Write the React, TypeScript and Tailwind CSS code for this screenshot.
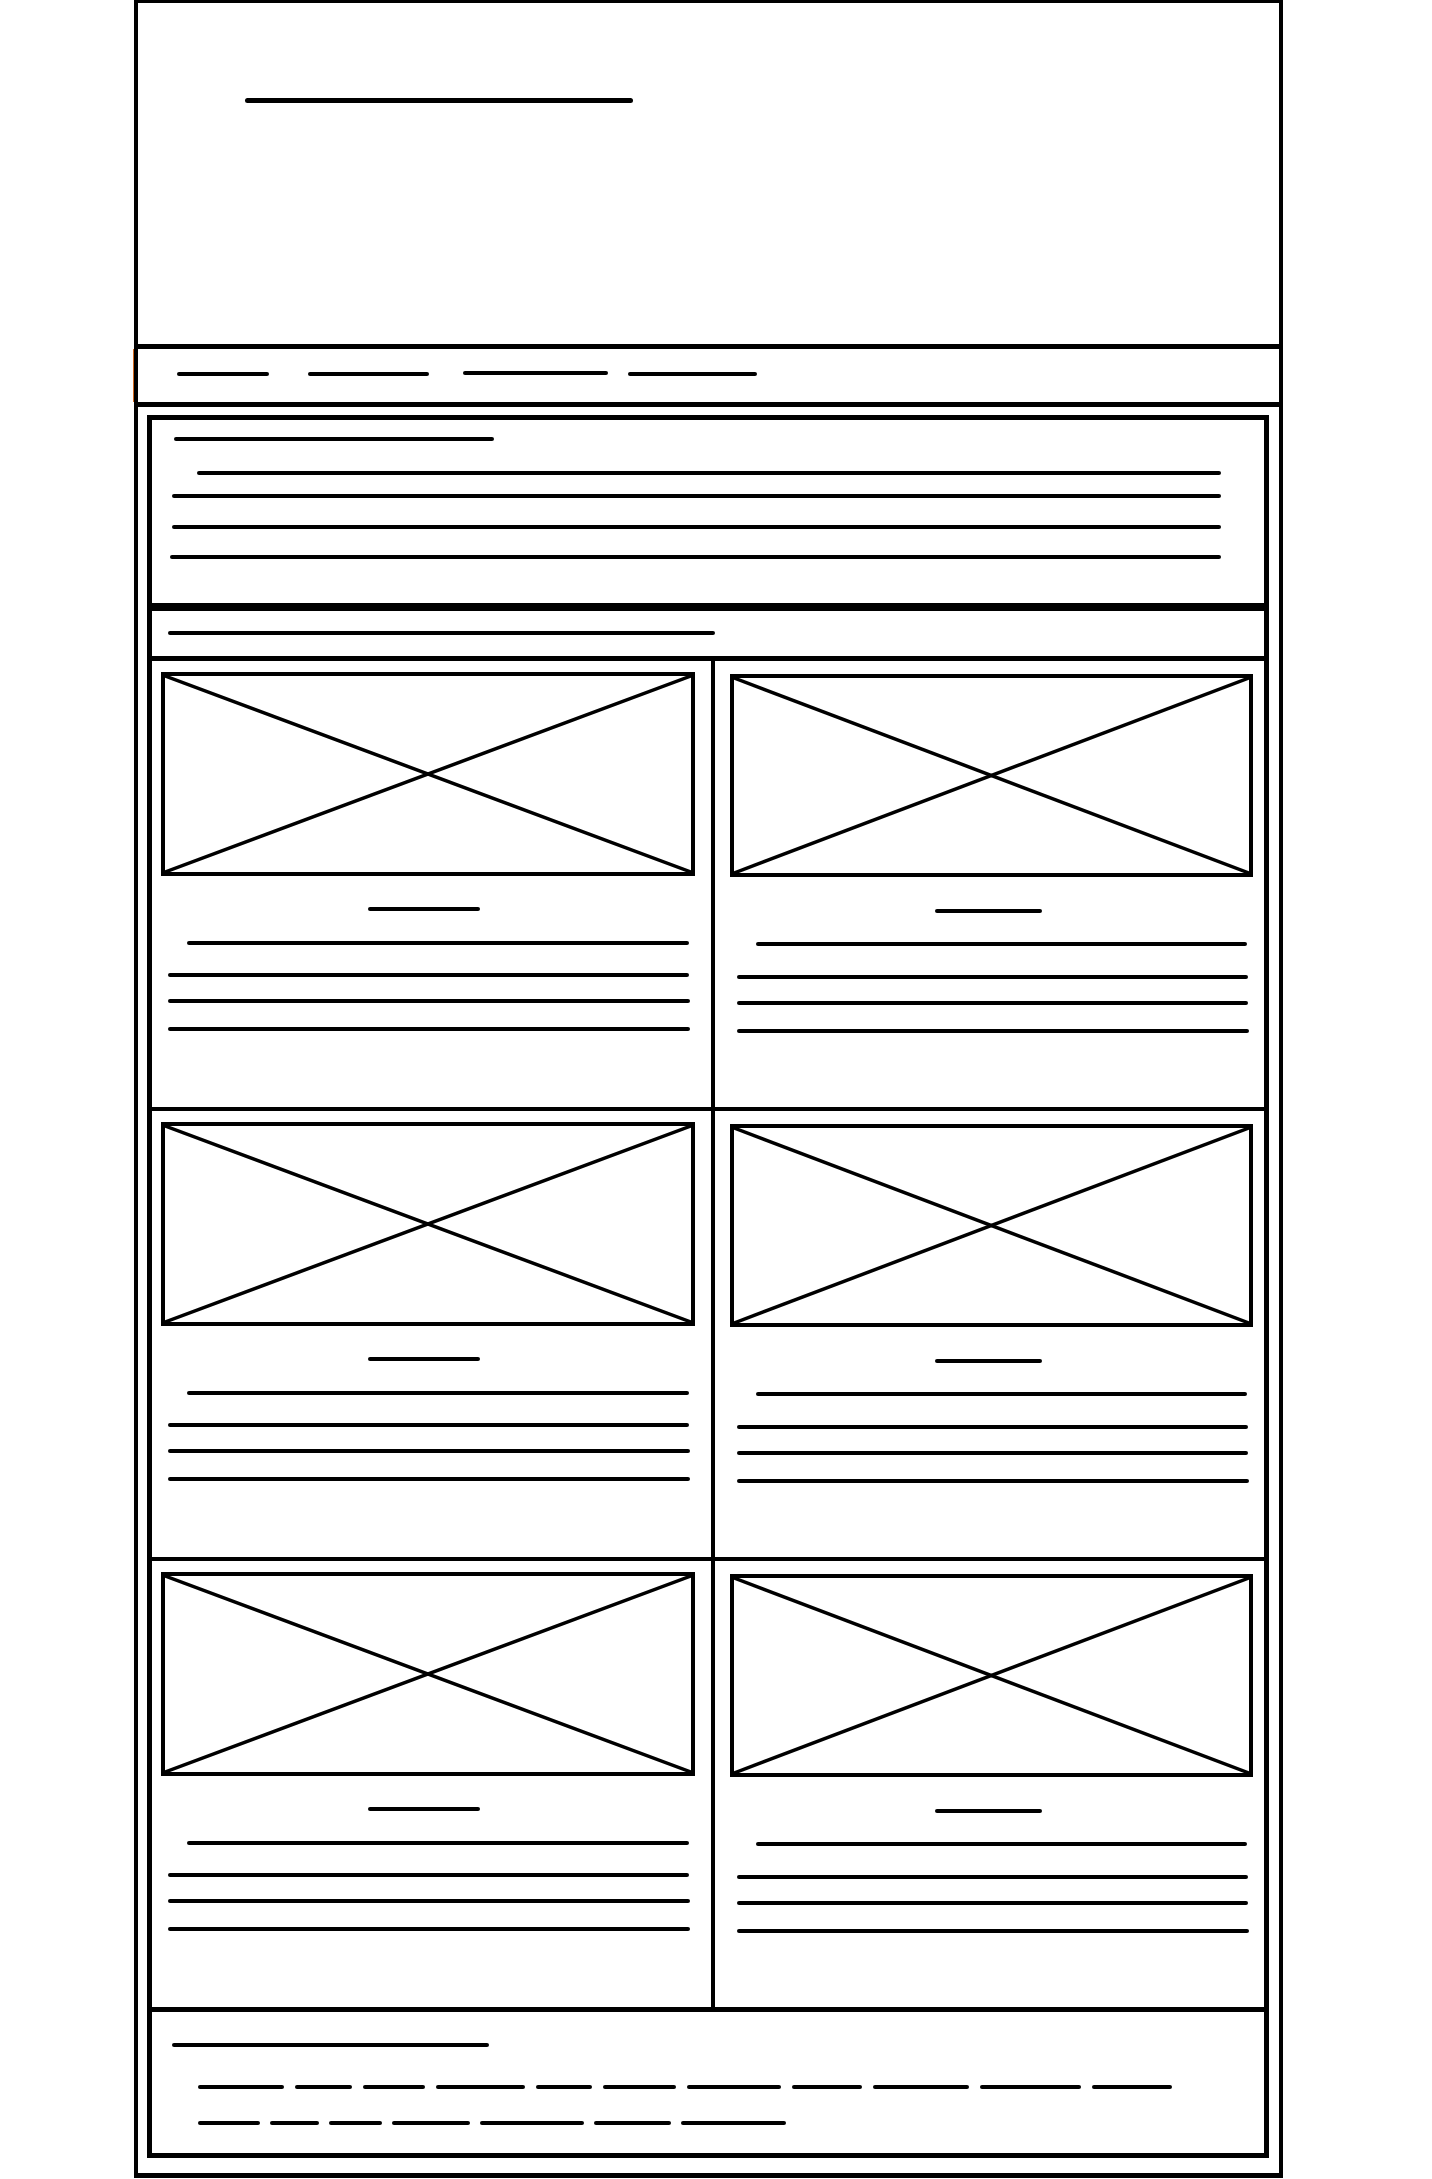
import React from 'react';

// a "text" placeholder stroke in the wireframe
function Bar({ className = '' }: { className?: string }) {
  return <div className={`h-[4px] shrink-0 rounded-full bg-black ${className}`} />;
}

// crossed-out image placeholder
function ImageBox({ className = '' }: { className?: string }) {
  return (
    <div className={`shrink-0 border-[4px] border-black ${className}`}>
      <svg className="block h-full w-full" viewBox="0 0 100 100" preserveAspectRatio="none">
        <line x1="0" y1="0" x2="100" y2="100" stroke="black" strokeWidth="3.5" vectorEffect="non-scaling-stroke" />
        <line x1="100" y1="0" x2="0" y2="100" stroke="black" strokeWidth="3.5" vectorEffect="non-scaling-stroke" />
      </svg>
    </div>
  );
}

function LeftCard() {
  return (
    <div className="flex h-[446px] flex-col border-r-[4px] border-black">
      <ImageBox className="ml-[9px] mt-[11px] h-[204px] w-[534px]" />
      <Bar className="ml-[216px] mt-[31px] w-[112px]" />
      <Bar className="ml-[35px] mt-[30px] w-[502px]" />
      <Bar className="ml-[16px] mt-[28px] w-[521px]" />
      <Bar className="ml-[16px] mt-[22px] w-[522px]" />
      <Bar className="ml-[16px] mt-[24px] w-[522px]" />
    </div>
  );
}

function RightCard() {
  return (
    <div className="flex h-[446px] flex-col">
      <ImageBox className="ml-[15px] mt-[13px] h-[203px] w-[523px]" />
      <Bar className="ml-[220px] mt-[32px] w-[107px]" />
      <Bar className="ml-[41px] mt-[29px] w-[491px]" />
      <Bar className="ml-[22px] mt-[29px] w-[511px]" />
      <Bar className="ml-[22px] mt-[22px] w-[511px]" />
      <Bar className="ml-[22px] mt-[24px] w-[512px]" />
    </div>
  );
}

const footerRow1 = [86, 57, 62, 89, 56, 73, 94, 70, 96, 101, 80];
const footerRow2 = [62, 49, 53, 78, 104, 77, 105];

export default function App() {
  return (
    <div className="min-h-[2179px] w-[1432px] bg-white">
      <div className="ml-[134px] flex h-[2178px] w-[1149px] flex-col border-x-[4px] border-b-[5px] border-t-[3px] border-black">
        {/* header */}
        <header className="h-[346px] shrink-0 border-b-[5px] border-black">
          <Bar className="ml-[107px] mt-[95px] h-[5px] w-[388px]" />
        </header>

        {/* nav */}
        <nav className="relative flex h-[58px] shrink-0 items-start border-b-[5px] border-black pt-[23px]">
          <span className="absolute -left-[5px] top-0 h-[53px] w-px bg-[#d2691e]" />
          <Bar className="ml-[39px] w-[92px]" />
          <Bar className="ml-[39px] w-[121px]" />
          <Bar className="-mt-px ml-[34px] w-[145px]" />
          <Bar className="ml-[20px] w-[129px]" />
        </nav>

        {/* content panel */}
        <main className="ml-[9px] mr-[10px] mt-[8px] flex flex-col border-[5px] border-black">
          <section className="flex h-[187px] flex-col border-b-[4px] border-black">
            <Bar className="ml-[22px] mt-[17px] w-[320px]" />
            <Bar className="ml-[45px] mt-[30px] w-[1024px]" />
            <Bar className="ml-[20px] mt-[19px] w-[1049px]" />
            <Bar className="ml-[20px] mt-[27px] w-[1049px]" />
            <Bar className="ml-[18px] mt-[26px] w-[1051px]" />
          </section>

          <section className="flex h-[54px] flex-col border-b-[5px] border-t-[4px] border-black">
            <Bar className="ml-[16px] mt-[20px] w-[547px]" />
          </section>

          <section className="grid grid-cols-[563px_549px] border-b-[5px] border-black">
            <div className="col-span-2 grid grid-cols-[563px_549px] border-b-[4px] border-black">
              <LeftCard />
              <RightCard />
            </div>
            <div className="col-span-2 grid grid-cols-[563px_549px] border-b-[4px] border-black">
              <LeftCard />
              <RightCard />
            </div>
            <div className="col-span-2 grid grid-cols-[563px_549px]">
              <LeftCard />
              <RightCard />
            </div>
          </section>

          <footer className="flex h-[141px] flex-col">
            <Bar className="ml-[20px] mt-[31px] w-[317px]" />
            <div className="ml-[46px] mt-[38px] flex gap-[11px]">
              {footerRow1.map((w, i) => (
                <div key={i} className="h-[4px] rounded-[2px] bg-black" style={{ width: w }} />
              ))}
            </div>
            <div className="ml-[46px] mt-[32px] flex gap-[10px]">
              {footerRow2.map((w, i) => (
                <div key={i} className="h-[4px] rounded-[2px] bg-black" style={{ width: w }} />
              ))}
            </div>
          </footer>
        </main>
      </div>
    </div>
  );
}
